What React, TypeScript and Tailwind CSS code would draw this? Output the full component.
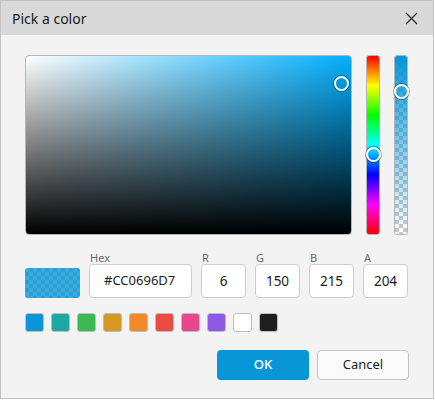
import React, { useState } from 'react';

const SWATCHES = ['#0b94d8', '#1ea8a5', '#3cb853', '#d49a24', '#f28a2b', '#ec4a45', '#e8478c', '#8c5ae5', '#ffffff', '#1e1e1e'];

const CHECKER = 'bg-[conic-gradient(#c8c8c8_25%,#ffffff_0_50%,#c8c8c8_0_75%,#ffffff_0)] bg-[length:8px_8px]';

function rgbToHsv(r: number, g: number, b: number) {
  const max = Math.max(r, g, b);
  const min = Math.min(r, g, b);
  const d = max - min;
  let h = 0;
  if (d !== 0) {
    if (max === r) h = ((g - b) / d) % 6;
    else if (max === g) h = (b - r) / d + 2;
    else h = (r - g) / d + 4;
    h *= 60;
    if (h < 0) h += 360;
  }
  return { h, s: max === 0 ? 0 : d / max, v: max / 255 };
}

const hex2 = (n: number) => n.toString(16).toUpperCase().padStart(2, '0');

function Thumb({ left, top }: { left: string; top: string }) {
  return (
    <div
      className="absolute w-[15px] h-[15px] -ml-[7.5px] -mt-[7.5px] rounded-full border-2 border-white shadow-[0_0_0_1px_rgba(0,0,0,0.35)]"
      style={{ left, top }}
    />
  );
}

function Field({ label, value, wide }: { label: string; value: string; wide?: boolean }) {
  return (
    <div className="flex flex-col">
      <span className="h-[12px] text-[11px] leading-[12px] text-[#6b6b6b] pl-[1px]">{label}</span>
      <div
        className={
          wide
            ? 'w-[103px] h-[34px] bg-white border border-[#cdcdcd] rounded-[4px] flex items-center pl-[14px] text-[13px] text-[#1b1b1b]'
            : 'w-[45px] h-[34px] bg-white border border-[#cdcdcd] rounded-[4px] flex items-center justify-center text-[13.5px] text-[#1b1b1b]'
        }
      >
        {value}
      </div>
    </div>
  );
}

export default function App() {
  const [color] = useState({ r: 6, g: 150, b: 215, a: 204 });
  const { h, s, v } = rgbToHsv(color.r, color.g, color.b);
  const rgb = `rgb(${color.r},${color.g},${color.b})`;
  const rgba = `rgba(${color.r},${color.g},${color.b},${color.a / 255})`;
  const hueColor = `hsl(${h},100%,50%)`;
  const hex = `#${hex2(color.a)}${hex2(color.r)}${hex2(color.g)}${hex2(color.b)}`;

  return (
    <div className="w-[435px] h-[400px] bg-white" style={{ fontFamily: '"Noto Sans", "Open Sans", sans-serif' }}>
      <div className="w-[434px] h-[399px] border border-[#c2c2c2] bg-[#f3f3f3] flex flex-col">
        {/* title bar */}
        <div className="h-[34px] bg-[#d9d9d9] flex items-center justify-between pl-[11px] pr-[15px]">
          <span className="text-[14px] text-[#1a1a1a]">Pick a color</span>
          <svg width="13" height="13" viewBox="0 0 13 13" className="text-[#222]">
            <path d="M1 1 L12 12 M12 1 L1 12" stroke="currentColor" strokeWidth="1.2" />
          </svg>
        </div>

        <div className="flex flex-col pl-[24px] pt-[20px]">
          {/* spectrum + sliders */}
          <div className="flex gap-[14px] h-[180px]">
            <div
              className="relative w-[327px] h-full rounded-[4px] border border-[#b5b5b5]"
              style={{ background: `linear-gradient(to top, #000, rgba(0,0,0,0)), linear-gradient(to right, #fff, ${hueColor})` }}
            >
              <Thumb left={`${s * 100}%`} top={`${(1 - v) * 100}%`} />
            </div>
            <div className="relative w-[14px] h-full rounded-[3px] border border-[#b5b5b5] bg-[linear-gradient(to_bottom,#f00,#ff0,#0f0,#0ff,#00f,#f0f,#f00)]">
              <Thumb left="50%" top={`${(h / 360) * 100}%`} />
            </div>
            <div className={`relative w-[14px] h-full rounded-[3px] border border-[#b5b5b5] ${CHECKER}`}>
              <div
                className="absolute inset-0 rounded-[2px]"
                style={{ background: `linear-gradient(to bottom, ${rgb}, rgba(${color.r},${color.g},${color.b},0))` }}
              />
              <Thumb left="50%" top={`${(1 - color.a / 255) * 100}%`} />
            </div>
          </div>

          {/* preview + values */}
          <div className="flex items-end gap-[9px] mt-[17px]">
            <div className={`w-[55px] h-[30px] rounded-[3px] overflow-hidden ${CHECKER}`}>
              <div className="w-full h-full" style={{ background: rgba }} />
            </div>
            <Field label="Hex" value={hex} wide />
            <Field label="R" value={String(color.r)} />
            <Field label="G" value={String(color.g)} />
            <Field label="B" value={String(color.b)} />
            <Field label="A" value={String(color.a)} />
          </div>

          {/* presets */}
          <div className="flex gap-[7px] mt-[15px]">
            {SWATCHES.map(c => (
              <div key={c} className="w-[19px] h-[19px] rounded-[3px] border border-[#bdbdbd]" style={{ background: c }} />
            ))}
          </div>

          {/* actions */}
          <div className="flex justify-end gap-[8px] mt-[18px] pr-[24px]">
            <button className="w-[92px] h-[30px] rounded-[4px] bg-[#0896d7] text-white text-[13px] font-medium">OK</button>
            <button className="w-[92px] h-[30px] rounded-[4px] bg-[#fbfbfb] border border-[#c4c4c4] text-[13px] text-[#1b1b1b]">Cancel</button>
          </div>
        </div>
      </div>
    </div>
  );
}
